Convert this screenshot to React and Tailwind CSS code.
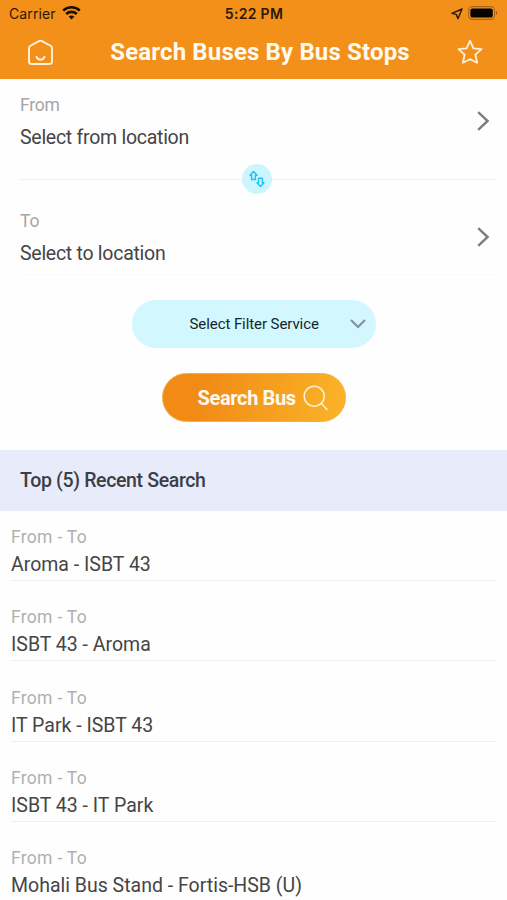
import React from "react";

const recentSearches = [
  "Aroma - ISBT 43",
  "ISBT 43 - Aroma",
  "IT Park - ISBT 43",
  "ISBT 43 - IT Park",
  "Mohali Bus Stand - Fortis-HSB (U)",
];

function StatusBar() {
  return (
    <div className="grid h-[27px] grid-cols-3 items-center pl-[9px] pr-[8px] font-['Inter',sans-serif] text-[13px] text-[#2b1804]">
      <div className="flex items-center gap-[6px]">
        <span className="text-[14px] leading-[27px] tracking-[0.1px]">Carrier</span>
        <svg className="-mt-px" width="19" height="14" viewBox="0 0 19 14" fill="none" stroke="#1c1003" strokeWidth="2.6">
          <path d="M1.2 4.6C5.8.2 13.2.2 17.8 4.6" />
          <path d="M4.2 8C7.2 5.2 11.8 5.2 14.8 8" />
          <path d="M6.6 10.6C8.2 9.2 10.8 9.2 12.4 10.6L9.5 13.4Z" fill="#1c1003" stroke="none" />
        </svg>
      </div>
      <div className="text-center text-[14px] font-semibold tracking-[0.3px] whitespace-nowrap">5:22 PM</div>
      <div className="flex items-center justify-end gap-[5px] pr-px">
        <svg width="12" height="12" viewBox="0 0 12 12" fill="none" stroke="#2b1804" strokeWidth="1.4" strokeLinejoin="round">
          <path d="M11 1L1 5.4L5.2 6.4L7 10.6Z" />
        </svg>
        <svg className="-mt-px" width="30" height="14" viewBox="0 0 30 14">
          <rect x="0.6" y="0.6" width="26" height="12.8" rx="3.8" fill="none" stroke="#a8681a" strokeWidth="1.1" />
          <rect x="2.4" y="2.4" width="22.4" height="9.2" rx="2.2" fill="#080400" />
          <path d="M28 4.8Q30.4 7 28 9.2Z" fill="#9a5c12" />
        </svg>
      </div>
    </div>
  );
}

function Header() {
  return (
    <header className="h-[79px] bg-[#f3901a]">
      <StatusBar />
      <div className="flex h-[50px] items-center justify-between pl-[27px] pr-[24px]">
        <svg width="27" height="27" viewBox="0 0 27 27" fill="none" stroke="#fff3df" strokeWidth="1.8" strokeLinejoin="round" strokeLinecap="round">
          <path d="M12 2.1Q13.5 1.3 15 2.1L23.6 6.8Q25 7.6 25 9.2V22.5Q25 25 22.5 25H4.5Q2 25 2 22.5V9.2Q2 7.6 3.4 6.8Z" />
          <path d="M9.4 17.6C10.8 21.6 16.2 21.6 17.6 17.6" />
        </svg>
        <h1 className="ml-[9px] text-[24px] leading-[30px] font-bold tracking-[0.15px] whitespace-nowrap text-[#fffaf0]">Search Buses By Bus Stops</h1>
        <svg width="26" height="26" viewBox="0 0 26 26" fill="none" stroke="#fff3df" strokeWidth="1.8" strokeLinejoin="round">
          <path d="M13 1.7L16.4 9.3L24.5 10.1L18.4 15.6L20.1 23.8L13 20.2L5.9 23.8L7.6 15.6L1.5 10.1L9.6 9.3Z" />
        </svg>
      </div>
    </header>
  );
}

function LocationRow({ label, value }) {
  return (
    <div className="flex items-center justify-between pr-[17px] pl-[20px]">
      <div>
        <div className="text-[17.5px] leading-[25px] tracking-[-0.2px] text-[#a5a5a5]">{label}</div>
        <div className="mt-[8px] text-[19.5px] leading-[24px] tracking-[-0.27px] text-[#454545]">{value}</div>
      </div>
      <svg className="-mt-px" width="14" height="20" viewBox="0 0 14 20" fill="none" stroke="#7d7d7d" strokeWidth="2.4">
        <path d="M2.2 1.2L11.6 10L2.2 18.8" />
      </svg>
    </div>
  );
}

function SwapDivider() {
  return (
    <div className="mt-[14px] flex h-[30px] items-center pr-[11px] pl-[20px]">
      <div className="h-px w-[222px] bg-[#f1f1f1]" />
      <div className="flex size-[30px] items-center justify-center rounded-full bg-[#cdf5fd]">
        <svg width="16" height="18" viewBox="0 0 16 18" fill="none" stroke="#1fc4f4" strokeWidth="1.5" strokeLinejoin="round">
          <path d="M4.5 1.6L8 5.2H6.4V9.4H2.6V5.2H1Z" />
          <path d="M11.5 16.4L15 12.8H13.4V8.2H9.6V12.8H8Z" />
        </svg>
      </div>
      <div className="h-px flex-1 bg-[#f1f1f1]" />
    </div>
  );
}

export default function App() {
  return (
    <div className="h-[900px] w-[507px] overflow-hidden bg-[#fefefe] font-['Roboto',sans-serif]">
      <Header />
      <section className="h-[371px] pt-[14px]">
        <LocationRow label="From" value="Select from location" />
        <SwapDivider />
        <div className="mt-[15px]">
          <LocationRow label="To" value="Select to location" />
        </div>
        <div className="mt-[8px] mr-[11px] ml-[20px] h-px bg-[#fafafa]" />
        <button className="mx-auto mt-[25px] flex h-[48px] w-[244px] items-center rounded-full bg-[#d3f7fe] pr-[10px] pl-[58px] text-[15px] tracking-[-0.08px] text-[#16262c]">
          <span className="flex-1 text-left whitespace-nowrap">Select Filter Service</span>
          <svg width="16" height="10" viewBox="0 0 16 10" fill="none" stroke="#858d9c" strokeWidth="2" strokeLinecap="round">
            <path d="M1.5 1.5L8 8L14.5 1.5" />
          </svg>
        </button>
        <button className="mx-auto mt-[25px] flex h-[49px] w-[184px] items-center gap-[7px] rounded-full border border-[#f3b03c] bg-linear-[100deg] from-[#f28a16] from-20% to-[#fab428] pl-[35px] text-[20px] font-bold tracking-[-0.35px] text-[#fffaf0]">
          <span className="whitespace-nowrap">Search Bus</span>
          <svg width="26" height="26" viewBox="0 0 26 26" fill="none" stroke="#fff0d4" strokeWidth="1.5" strokeLinecap="round">
            <circle cx="11.2" cy="11.2" r="10" />
            <path d="M18.4 18.4L24 24.4" />
          </svg>
        </button>
      </section>
      <h2 className="h-[61px] bg-[#e8ecfa] pl-[20px] text-[19.5px] leading-[61px] font-medium tracking-[-0.35px] text-[#3c3e45]">Top (5) Recent Search</h2>
      <ul className="pr-[11px] pl-[11px]">
        {recentSearches.map((route) => (
          <li key={route} className="h-[80.25px] pt-[14px]">
            <div className="text-[17.5px] leading-[24px] tracking-[0.3px] text-[#b0b0b0]">From - To</div>
            <div className="mt-[4px] h-[28px] border-b border-[#efeff1] text-[19.5px] leading-[24px] text-[#454545]">{route}</div>
          </li>
        ))}
      </ul>
    </div>
  );
}
